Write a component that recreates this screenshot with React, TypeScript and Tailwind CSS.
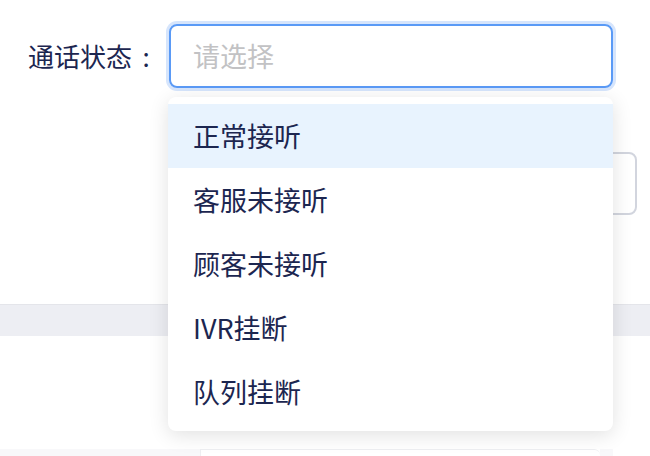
import React from "react";

const items = ["正常接听", "客服未接听", "顾客未接听", "IVR挂断", "队列挂断"];

export default function App() {
  return (
    <div
      className="relative w-[650px] h-[456px] overflow-hidden bg-white"
      style={{ fontFamily: '"Noto Sans CJK SC", "Noto Sans", sans-serif' }}
    >
      {/* form area */}
      <div className="h-[304px] pt-[24px]">
        <div className="flex items-center h-[64px]">
          <div className="w-[160px] flex justify-end items-center text-[26px] text-[#1c2650] leading-none">
            <span>通话状态</span>
            <span className="inline-block w-[28px] text-center">:</span>
          </div>
          <div className="ml-[9px] w-[444px] h-[64px] rounded-[8px] border-2 border-[#5a9af6] ring-[3px] ring-[#d6e5fc] flex items-center pl-[22px] text-[27px] text-[#c2c2c4]">
            请选择
          </div>
        </div>
        <div className="flex mt-[64px] h-[63px] pl-[200px]">
          <div className="w-[437px] h-[63px] rounded-[8px] border-2 border-[#d2d5de]" />
        </div>
      </div>
      {/* gray band */}
      <div className="h-[32px] bg-[#edeef3] border-t border-[#e4e5ea]" />
      {/* lower area */}
      <div className="h-[120px] pt-[113px] flex">
        <div className="w-[200px] h-[10px] bg-[#f8f8fa]" />
        <div className="w-[400px] h-[10px] bg-white border-t border-l border-[#eeeff2] rounded-tr-[6px]" />
        <div className="w-[13px] h-[10px] bg-[#f8f8fa]" />
      </div>

      {/* dropdown menu */}
      <div className="absolute left-[168px] top-[97px] w-[445px] rounded-[8px] bg-white py-[7px] shadow-[0_4px_20px_rgba(0,0,0,0.12)]">
        {items.map((t, i) => (
          <div
            key={t}
            className={
              i === 0
                ? "h-[64px] flex items-center pl-[25px] text-[27px] text-[#1c2650] bg-[#e8f3fe]"
                : "h-[64px] flex items-center pl-[25px] text-[27px] text-[#1c2650]"
            }
          >
            {t}
          </div>
        ))}
      </div>
    </div>
  );
}
